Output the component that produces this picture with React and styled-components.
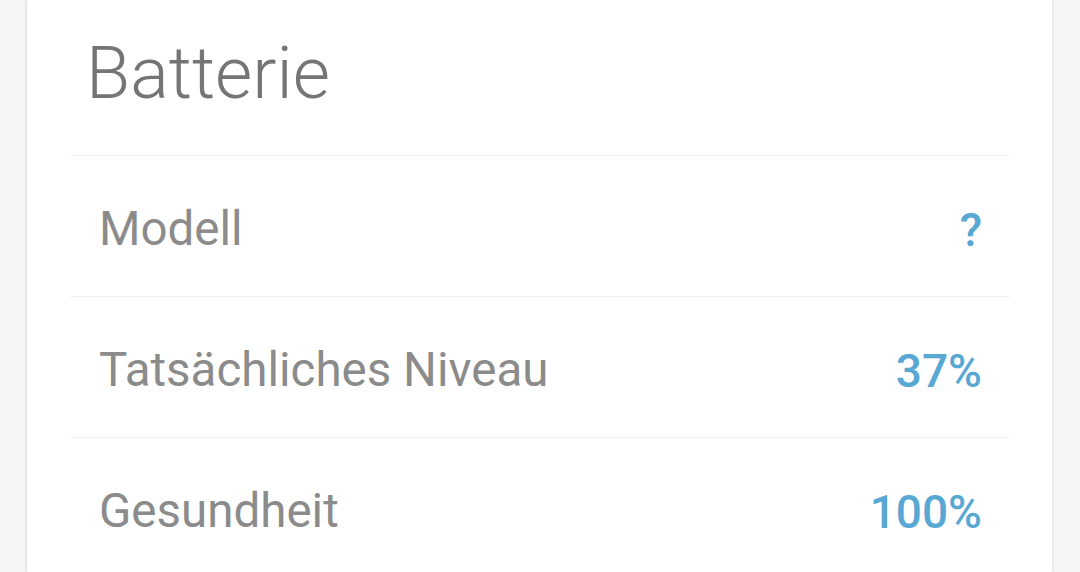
import React from "react";
import styled, { createGlobalStyle } from "styled-components";

const GlobalStyle = createGlobalStyle`
  html, body {
    margin: 0;
    padding: 0;
    background: #f6f6f6;
    font-family: Roboto, "Noto Sans", sans-serif;
    overflow: hidden;
  }
`;

const Page = styled.div`
  width: 1080px;
  height: 572px;
  padding-left: 27px;
  box-sizing: border-box;
`;

const Card = styled.section`
  width: 1025px;
  height: 572px;
  background: #ffffff;
  box-shadow: -1px 0 3px rgba(0, 0, 0, 0.12), 1px 0 3px rgba(0, 0, 0, 0.06);
  padding: 38px 42px 0 43px;
  box-sizing: border-box;
`;

const Title = styled.h1`
  margin: 0 0 45px 16px;
  font-size: 72px;
  line-height: 1;
  font-weight: 300;
  color: #757575;
`;

const List = styled.div`
  display: flex;
  flex-direction: column;
`;

const Row = styled.div`
  display: flex;
  justify-content: space-between;
  align-items: center;
  height: 133px;
  box-sizing: content-box;
  border-top: 1px solid #efefef;
  padding: 7px 28px 0 29px;
  line-height: 1;
`;

const Label = styled.span`
  font-size: 47.5px;
  color: #8b8b8b;
  font-weight: 400;
`;

const Value = styled.span`
  font-size: 46px;
  color: #58a8d3;
  font-weight: 500;
`;

const rows = [
  { label: "Modell", value: "?" },
  { label: "Tatsächliches Niveau", value: "37%" },
  { label: "Gesundheit", value: "100%" },
];

export default function App() {
  return (
    <Page>
      <GlobalStyle />
      <Card>
        <Title>Batterie</Title>
        <List>
          {rows.map((r) => (
            <Row key={r.label}>
              <Label>{r.label}</Label>
              <Value>{r.value}</Value>
            </Row>
          ))}
        </List>
      </Card>
    </Page>
  );
}
